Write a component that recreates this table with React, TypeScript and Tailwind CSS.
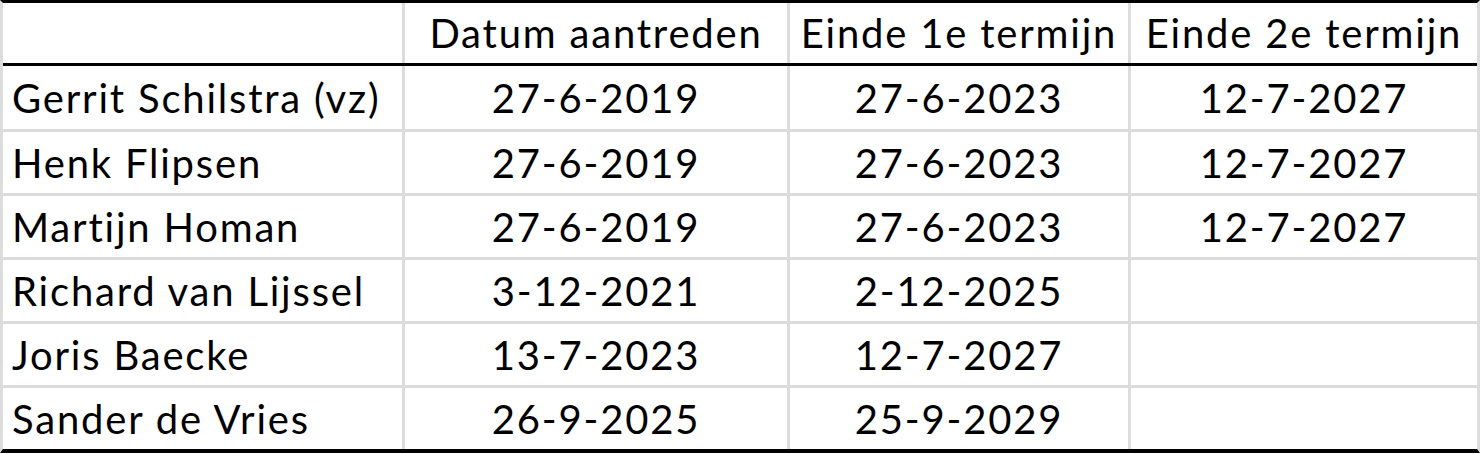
const headers = ["", "Datum aantreden", "Einde 1e termijn", "Einde 2e termijn"];

const rows = [
  ["Gerrit Schilstra (vz)", "27-6-2019", "27-6-2023", "12-7-2027"],
  ["Henk Flipsen", "27-6-2019", "27-6-2023", "12-7-2027"],
  ["Martijn Homan", "27-6-2019", "27-6-2023", "12-7-2027"],
  ["Richard van Lijssel", "3-12-2021", "2-12-2025", ""],
  ["Joris Baecke", "13-7-2023", "12-7-2027", ""],
  ["Sander de Vries", "26-9-2025", "25-9-2029", ""],
];

const cols = "grid grid-cols-[402px_385px_341px_346px]";

export default function App() {
  return (
    <div className="w-[1482px] h-[454px] bg-white text-black font-['Lato','Noto_Sans',sans-serif] text-[40px] leading-none tracking-[1.8px]">
      <div className="w-[1480px] border-t-[3px] border-b-[4px] border-t-black border-b-black border-x-[3px] border-x-[#dcdcdc]">
        {/* header */}
        <div className={cols + " h-[63px] border-b-[3px] border-black"}>
          {headers.map((h, i) => (
            <div
              key={i}
              className={
                "flex items-center justify-center " +
                (i < 3 ? "border-r-[3px] border-[#dcdcdc]" : "")
              }
            >
              {h}
            </div>
          ))}
        </div>

        {rows.map((r, ri) => (
          <div
            key={ri}
            className={cols + (ri === 0 ? " h-[63px]" : " h-[64px] border-t-[3px] border-[#dcdcdc]")}
          >
            {r.map((c, ci) => (
              <div
                key={ci}
                className={
                  "flex items-center " +
                  (ci === 0 ? "justify-start pl-[9px] " : "justify-center ") +
                  (ci < 3 ? "border-r-[3px] border-[#dcdcdc]" : "")
                }
              >
                {c}
              </div>
            ))}
          </div>
        ))}
      </div>
    </div>
  );
}
